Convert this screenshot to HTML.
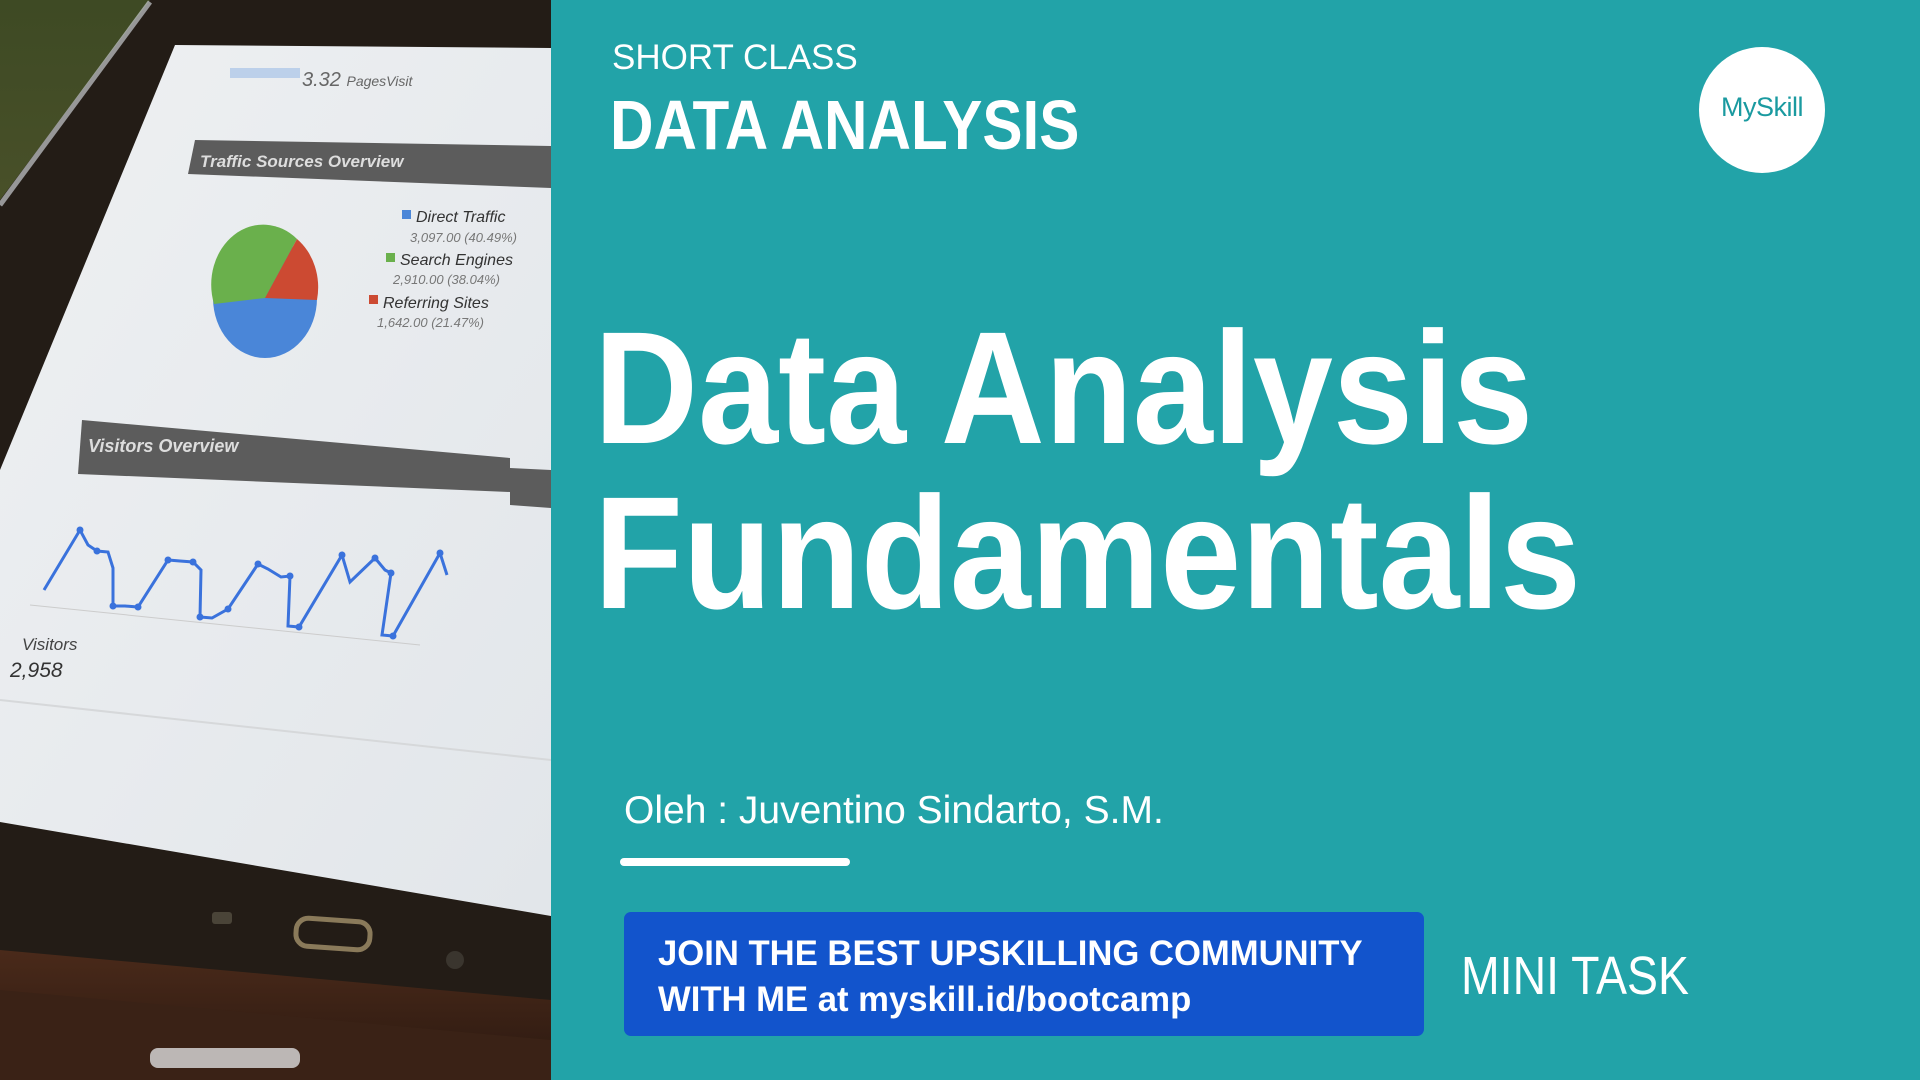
<!DOCTYPE html>
<html><head><meta charset="utf-8"><style>
*{margin:0;padding:0;box-sizing:border-box}
html,body{width:1920px;height:1080px;overflow:hidden;background:#22A3A8;font-family:"Liberation Sans",sans-serif;color:#fff}
.abs{position:absolute;white-space:nowrap}
</style></head><body>
<svg class="abs" style="left:0;top:0" width="551" height="1080" viewBox="0 0 551 1080">
<defs>
<linearGradient id="bg" x1="0" y1="0" x2="0" y2="1"><stop offset="0" stop-color="#3e4a24"/><stop offset="0.5" stop-color="#5a5a30"/><stop offset="1" stop-color="#2e2a1c"/></linearGradient>
<linearGradient id="scr" x1="0" y1="0" x2="1" y2="1"><stop offset="0" stop-color="#eef0f2"/><stop offset="1" stop-color="#e2e6ea"/></linearGradient>
<linearGradient id="tbl" x1="0" y1="0" x2="0" y2="1"><stop offset="0" stop-color="#4a2a1a"/><stop offset="1" stop-color="#2a1810"/></linearGradient>
</defs>
<rect width="551" height="1080" fill="url(#bg)"/>
<polygon points="150,0 551,0 551,1040 0,1000 0,200" fill="#231c16"/>
<line x1="150" y1="2" x2="0" y2="205" stroke="#c8ccd0" stroke-width="5" opacity="0.7"/>
<polygon points="0,950 551,1000 551,1080 0,1080" fill="url(#tbl)"/>
<polygon points="0,990 551,1040 551,1080 0,1080" fill="#3a2216"/>
<polygon points="175,45 551,48 551,916 0,822 0,470" fill="url(#scr)"/>
<rect x="230" y="68" width="70" height="10" fill="#bcd0ea"/>
<text x="302" y="86" font-size="20" fill="#666" font-style="italic" font-family="Liberation Sans">3.32 <tspan font-size="14">PagesVisit</tspan></text>
<polygon points="195,140 551,146 551,188 188,174" fill="#5c5c5c"/>
<text x="200" y="167" font-size="17" fill="#ddd" font-style="italic" font-weight="bold">Traffic Sources Overview</text>
<ellipse cx="265" cy="298" rx="52" ry="60" fill="#4a86d8"/>
<path d="M265,298 L214,304 A52,60 0 0 1 297,239 Z" fill="#6ab04c"/>
<path d="M265,298 L297,239 A52,60 0 0 1 317,300 Z" fill="#cc4a32"/>
<rect x="402" y="210" width="9" height="9" fill="#4a86d8"/>
<text x="416" y="222" font-size="16" fill="#333" font-style="italic">Direct Traffic</text>
<text x="410" y="242" font-size="13" fill="#777" font-style="italic">3,097.00 (40.49%)</text>
<rect x="386" y="253" width="9" height="9" fill="#6ab04c"/>
<text x="400" y="265" font-size="16" fill="#333" font-style="italic">Search Engines</text>
<text x="393" y="284" font-size="13" fill="#777" font-style="italic">2,910.00 (38.04%)</text>
<rect x="369" y="295" width="9" height="9" fill="#cc4a32"/>
<text x="383" y="308" font-size="16" fill="#333" font-style="italic">Referring Sites</text>
<text x="377" y="327" font-size="13" fill="#777" font-style="italic">1,642.00 (21.47%)</text>
<polygon points="82,420 510,458 510,492 78,474" fill="#5c5c5c"/>
<text x="88" y="452" font-size="18" fill="#ddd" font-style="italic" font-weight="bold">Visitors Overview</text>
<polygon points="510,468 551,470 551,508 510,505" fill="#5c5c5c"/>
<polyline points="44,590 80,530 88,545 97,551 108,552 113,568 113,606 125,606 138,607 168,560 180,561 193,562 201,570 200,617 212,618 228,609 258,564 268,569 281,577 290,576 288,626 299,627 342,555 350,582 375,558 385,570 391,573 382,635 393,636 440,553 447,575" fill="none" stroke="#3a72dc" stroke-width="3"/>
<g fill="#3a72dc"><circle cx="80" cy="530" r="3.5"/><circle cx="97" cy="551" r="3.5"/><circle cx="113" cy="606" r="3.5"/><circle cx="138" cy="607" r="3.5"/><circle cx="168" cy="560" r="3.5"/><circle cx="193" cy="562" r="3.5"/><circle cx="200" cy="617" r="3.5"/><circle cx="228" cy="609" r="3.5"/><circle cx="258" cy="564" r="3.5"/><circle cx="290" cy="576" r="3.5"/><circle cx="299" cy="627" r="3.5"/><circle cx="342" cy="555" r="3.5"/><circle cx="375" cy="558" r="3.5"/><circle cx="391" cy="573" r="3.5"/><circle cx="393" cy="636" r="3.5"/><circle cx="440" cy="553" r="3.5"/></g>
<line x1="30" y1="605" x2="420" y2="645" stroke="#ccc" stroke-width="1"/>
<text x="22" y="650" font-size="17" fill="#444" font-style="italic">Visitors</text>
<text x="10" y="677" font-size="21" fill="#333" font-style="italic">2,958</text>
<line x1="0" y1="700" x2="551" y2="760" stroke="#d6d8da" stroke-width="2"/>
<rect x="296" y="920" width="74" height="28" rx="12" fill="none" stroke="#8a7a5a" stroke-width="5" transform="rotate(4 333 934)"/>
<rect x="212" y="912" width="20" height="12" rx="3" fill="#4a4438"/>
<circle cx="455" cy="960" r="9" fill="#3a352e"/>
<rect x="150" y="1048" width="150" height="20" rx="8" fill="#ddd" opacity="0.8"/>
</svg>

<div class="abs" style="left:612px;top:36px;font-size:35px;line-height:44px">SHORT CLASS</div>
<div class="abs" style="left:610px;top:88px;font-size:70px;line-height:74px;font-weight:bold;transform:scaleX(0.86);transform-origin:0 0">DATA ANALYSIS</div>

<div class="abs" style="left:1699px;top:47px;width:126px;height:126px;border-radius:50%;background:#fff"></div>
<div class="abs" style="left:1699px;top:92px;width:126px;text-align:center;font-size:27px;color:#1a9aa0;letter-spacing:-0.5px">MySkill</div>

<div class="abs" style="left:594px;top:303px;font-size:160px;line-height:170px;font-weight:bold;transform:scaleX(0.9);transform-origin:0 0">Data Analysis</div>
<div class="abs" style="left:594px;top:468px;font-size:160px;line-height:170px;font-weight:bold;transform:scaleX(0.91);transform-origin:0 0">Fundamentals</div>

<div class="abs" style="left:624px;top:787px;font-size:39px;line-height:48px">Oleh : Juventino Sindarto, S.M.</div>
<div class="abs" style="left:620px;top:858px;width:230px;height:8px;border-radius:4px;background:#fff"></div>

<div class="abs" style="left:624px;top:912px;width:800px;height:124px;border-radius:7px;background:#1254CC"></div>
<div class="abs" style="left:658px;top:931px;font-size:35px;line-height:46px;font-weight:bold;transform:scaleX(0.99);transform-origin:0 0">JOIN THE BEST UPSKILLING COMMUNITY<br>WITH ME at myskill.id/bootcamp</div>

<div class="abs" style="left:1461px;top:946px;font-size:54px;line-height:60px;transform:scaleX(0.86);transform-origin:0 0">MINI TASK</div>
</body></html>
